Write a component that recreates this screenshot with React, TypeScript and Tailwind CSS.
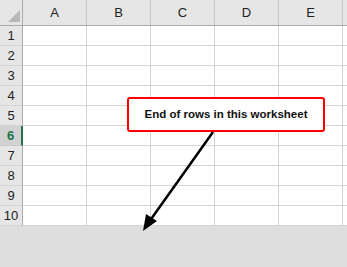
import React from 'react';

const columns = ['A', 'B', 'C', 'D', 'E'];
const rows = [1, 2, 3, 4, 5, 6, 7, 8, 9, 10];
const selectedRow = 6;

export default function App() {
  return (
    <div className="relative w-[347px] h-[267px] overflow-hidden bg-[#dedede] font-['Liberation_Sans',Arial,sans-serif] text-[#222]">
      {/* Column headers */}
      <div className="flex h-[26px] bg-[#e6e6e6] border-b border-[#ababab]">
        <div className="relative w-[23px] shrink-0 border-r border-[#ababab]">
          {/* select-all triangle */}
          <div className="absolute left-[8px] top-[10px] w-[12px] h-[12px] bg-[#b8b8b8] [clip-path:polygon(100%_0,100%_100%,0_100%)]" />
        </div>
        {columns.map((c) => (
          <div
            key={c}
            className="w-[64px] shrink-0 flex items-end justify-center pb-[3px] text-[13px] border-r border-[#c8c8c8]"
          >
            {c}
          </div>
        ))}
        <div className="flex-1" />
      </div>

      {/* Rows */}
      {rows.map((r) => {
        const selected = r === selectedRow;
        return (
          <div key={r} className="flex h-[20px] bg-white">
            <div
              className={
                selected
                  ? 'w-[23px] shrink-0 flex items-center justify-center text-[13px] font-bold text-[#217346] bg-[#d2d2d2] border-b border-[#c8c8c8] border-r-2 border-r-[#217346]'
                  : 'w-[23px] shrink-0 flex items-center justify-center text-[13px] bg-[#e6e6e6] border-b border-[#d4d4d4] border-r border-r-[#ababab]'
              }
            >
              {r}
            </div>
            {columns.map((c) => (
              <div key={c} className="w-[64px] shrink-0 border-r border-b border-[#d4d4d4]" />
            ))}
            <div className="flex-1 border-b border-[#d4d4d4]" />
          </div>
        );
      })}

      {/* Callout */}
      <div className="absolute left-[127px] top-[97px] w-[198px] h-[35px] rounded-[3px] border-2 border-[#ff0000] bg-white flex items-center justify-center">
        <span className="text-[11.5px] font-bold text-[#111]">End of rows in this worksheet</span>
      </div>

      {/* Arrow */}
      <svg className="absolute left-0 top-0 pointer-events-none" width="347" height="267" viewBox="0 0 347 267">
        <line x1="213" y1="132" x2="149" y2="222" stroke="#000" strokeWidth="2.5" />
        <polygon points="143,231 146,214 157,221" fill="#000" />
      </svg>
    </div>
  );
}
